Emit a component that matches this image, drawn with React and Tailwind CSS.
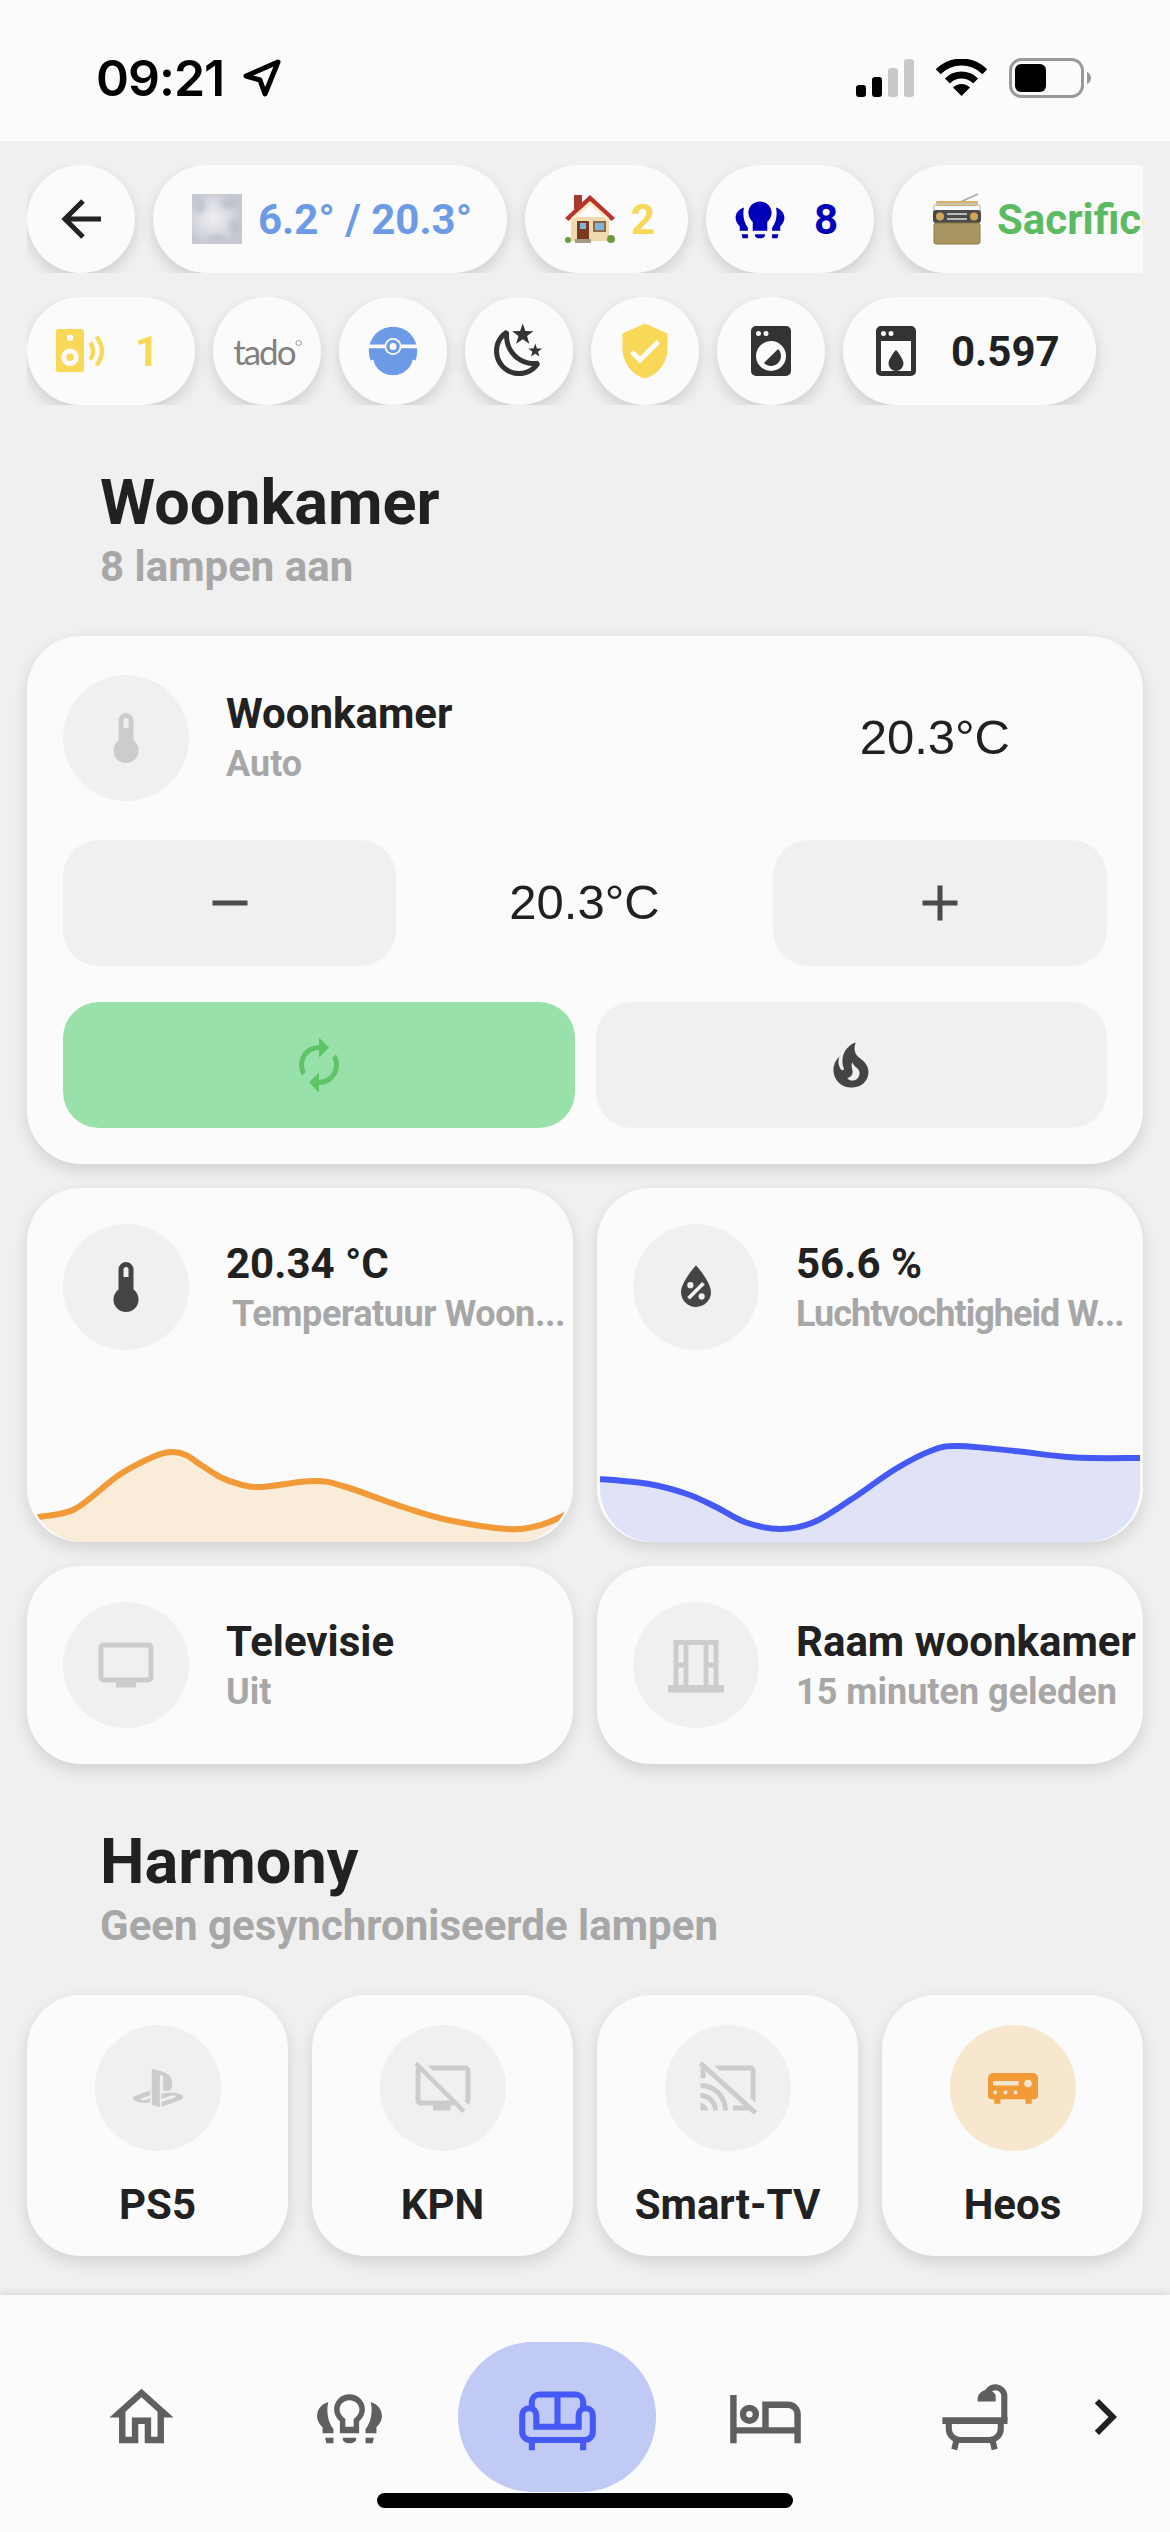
const ICONS = {
  arrowLeft: 'M20,11V13H8L13.5,18.5L12.08,19.92L4.16,12L12.08,4.08L13.5,5.5L8,11H20Z',
  moon: 'M17.75,4.09L15.22,6.03L16.13,9.09L13.5,7.28L10.87,9.09L11.78,6.03L9.25,4.09L12.44,4L13.5,1L14.56,4L17.75,4.09M21.25,11L19.61,12.25L20.2,14.23L18.5,13.06L16.8,14.23L17.39,12.25L15.75,11L17.81,10.95L18.5,9L19.19,10.95L21.25,11M18.97,15.95C19.8,15.87 20.69,17.05 20.16,17.8C19.84,18.25 19.5,18.67 19.08,19.07C15.17,23 8.84,23 4.94,19.07C1.03,15.17 1.03,8.83 4.94,4.93C5.34,4.53 5.76,4.17 6.21,3.85C6.96,3.32 8.14,4.21 8.06,5.04C7.79,7.9 8.75,10.87 10.95,13.06C13.14,15.26 16.1,16.22 18.97,15.95M17.33,17.97C14.5,17.81 11.7,16.64 9.53,14.5C7.36,12.31 6.2,9.5 6.04,6.68C3.23,9.82 3.34,14.64 6.35,17.66C9.37,20.67 14.19,20.78 17.33,17.97Z',
  shield: 'M10,17L6,13L7.41,11.59L10,14.17L16.59,7.58L18,9L10,17M12,1L3,5V11C3,16.55 6.84,21.74 12,23C17.16,21.74 21,16.55 21,11V5L12,1Z',
  washer: 'M6,2H18A2,2 0 0,1 20,4V20A2,2 0 0,1 18,22H6A2,2 0 0,1 4,20V4A2,2 0 0,1 6,2ZM7,4A1,1 0 0,0 6,5A1,1 0 0,0 7,6A1,1 0 0,0 8,5A1,1 0 0,0 7,4ZM10,4A1,1 0 0,0 9,5A1,1 0 0,0 10,6A1,1 0 0,0 11,5A1,1 0 0,0 10,4ZM12,8A6,6 0 0,0 6,14A6,6 0 0,0 12,20A6,6 0 0,0 18,14A6,6 0 0,0 12,8ZM14.83,11.17C16.39,12.73 16.39,15.27 14.83,16.83C13.27,18.39 10.73,18.39 9.17,16.83L14.83,11.17Z',
  dishwasher: 'M6 2H18A2 2 0 0 1 20 4V20A2 2 0 0 1 18 22H6A2 2 0 0 1 4 20V4A2 2 0 0 1 6 2ZM7 4A1 1 0 1 0 7 6A1 1 0 1 0 7 4ZM10 4A1 1 0 1 0 10 6A1 1 0 1 0 10 4ZM6 8V20H18V8ZM12 11.5C12 11.5 9 15 9 17A3 3 0 0 0 15 17C15 15 12 11.5 12 11.5Z',
  thermometer: 'M15 13V5A3 3 0 0 0 9 5V13A5 5 0 1 0 15 13ZM12 4A1 1 0 0 1 13 5V8H11V5A1 1 0 0 1 12 4Z',
  minus: 'M19,13H5V11H19V13Z',
  plus: 'M19,13H13V19H11V13H5V11H11V5H13V11H19V13Z',
  autorenew: 'M12,6V9L16,5L12,1V4A8,8 0 0,0 4,12C4,13.57 4.46,15.03 5.24,16.26L6.7,14.8C6.25,13.97 6,13 6,12A6,6 0 0,1 12,6M18.76,7.74L17.3,9.2C17.74,10.04 18,11 18,12A6,6 0 0,1 12,18V15L8,19L12,23V20A8,8 0 0,0 20,12C20,10.43 19.54,8.97 18.76,7.74Z',
  fire: 'M17.66 11.2C17.43 10.9 17.15 10.64 16.89 10.38C16.22 9.78 15.46 9.35 14.82 8.72C13.33 7.26 13 4.85 13.95 3C13 3.23 12.17 3.75 11.46 4.32C8.87 6.4 7.85 10.07 9.07 13.22C9.11 13.32 9.15 13.42 9.15 13.55C9.15 13.77 9 13.97 8.8 14.05C8.57 14.15 8.33 14.09 8.14 13.93C8.08 13.88 8.04 13.83 8 13.76C6.87 12.33 6.69 10.28 7.45 8.64C5.78 10 4.87 12.3 5 14.47C5.06 14.97 5.12 15.47 5.29 15.97C5.43 16.57 5.7 17.17 6 17.7C7.08 19.43 8.95 20.67 10.96 20.92C13.1 21.19 15.39 20.8 17.03 19.32C18.86 17.66 19.5 15 18.56 12.72L18.43 12.46C18.28 12.13 17.66 11.2 17.66 11.2ZM14.5 17.5C14.22 17.74 13.76 18 13.4 18.1C12.28 18.5 11.16 17.94 10.5 17.28C11.69 17 12.4 16.12 12.61 15.23C12.78 14.43 12.46 13.77 12.33 13C12.21 12.26 12.23 11.63 12.5 10.94C12.69 11.32 12.89 11.7 13.13 12C13.9 13 15.11 13.44 15.37 14.8C15.41 14.94 15.43 15.08 15.43 15.23C15.46 16.05 15.1 16.95 14.5 17.5Z',
  waterPercent: 'M12,3.25C12,3.25 6,10 6,14C6,17.32 8.69,20 12,20A6,6 0 0,0 18,14C18,10 12,3.25 12,3.25ZM14.47,9.97L15.53,11.03L9.53,17.03L8.47,15.97ZM9.75,10A1.25,1.25 0 0,1 11,11.25A1.25,1.25 0 0,1 9.75,12.5A1.25,1.25 0 0,1 8.5,11.25A1.25,1.25 0 0,1 9.75,10ZM14.25,14.5A1.25,1.25 0 0,1 15.5,15.75A1.25,1.25 0 0,1 14.25,17A1.25,1.25 0 0,1 13,15.75A1.25,1.25 0 0,1 14.25,14.5Z',
  television: 'M21,17H3V5H21ZM21,3H3A2,2 0 0,0 1,5V17A2,2 0 0,0 3,19H8V21H16V19H21A2,2 0 0,0 23,17V5A2,2 0 0,0 21,3Z',
  window: 'M3 2H21V20H23.2V23H0.8V20H3ZM5 4V11H7V4ZM5 13V20H7V13ZM9 4V20H15V4ZM17 4V11H19V4ZM17 13V20H19V13Z',
  playstation: 'M9.5,4.27C10.88,4.53 12.9,5.14 14,5.5C16.75,6.45 17.69,7.63 17.69,10.29C17.69,12.89 16.09,13.87 14.05,12.89V8.05C14.05,7.5 13.95,6.97 13.41,6.82C13,6.69 12.76,7.07 12.76,7.63V19.73L9.5,18.69V4.27M13.37,17.62L18.62,15.75C19.22,15.54 19.31,15.24 18.83,15.08C18.34,14.92 17.47,14.97 16.87,15.18L13.37,16.41V14.45L13.58,14.38C13.58,14.38 14.59,14 16,13.87C17.43,13.71 19.17,13.89 20.53,14.4C22.07,14.89 22.25,15.61 21.86,16.1C21.46,16.6 20.5,16.95 20.5,16.95L13.37,19.5V17.62M3.5,17.42C1.93,17 1.66,16.05 2.38,15.5C3.05,15 4.18,14.65 4.18,14.65L8.86,13V14.88L5.5,16.09C4.9,16.3 4.81,16.6 5.29,16.76C5.77,16.92 6.65,16.88 7.24,16.66L8.86,16.08V17.77L8.54,17.83C6.92,18.09 5.2,18 3.5,17.42Z',
  monitorOff: 'M0.5,2.77L1.78,1.5L21,20.72L19.73,22L16.73,19H15V21H8V19H3A2,2 0 0,1 1,17V5C1,4.5 1.2,4 1.5,3.77L0.5,2.77M3,17H14.73L3,5.27V17M21,17V5H7.82L5.82,3H21A2,2 0 0,1 23,5V17C23,17.7 22.64,18.32 22.09,18.68L20.41,17H21Z',
  castOff: 'M1.6,1.27L0.25,2.75L1.41,3.8C1.16,4.13 1,4.55 1,5V8H3V5.23L18.2,19H14V21H20.41L22.31,22.72L23.65,21.24M6.5,3L8.7,5H21V16.14L23,17.95V5C23,3.89 22.1,3 21,3M1,10V12A9,9 0 0,1 10,21H12C12,14.92 7.08,10 1,10M1,14V16A5,5 0 0,1 6,21H8A7,7 0 0,0 1,14M1,18V21H4A3,3 0 0,0 1,18Z',
  receiver: 'M4 6H20A2 2 0 0 1 22 8V15A1.5 1.5 0 0 1 20.5 16.5H19.5V18.3H17V16.5H7V18.3H4.5V16.5H3.5A1.5 1.5 0 0 1 2 15V8A2 2 0 0 1 4 6ZM4 9.2V11H14.2V9.2ZM18 8.7A1.5 1.5 0 1 0 18 11.7A1.5 1.5 0 1 0 18 8.7ZM4.2 13.1V14.5H5.6V13.1ZM8.3 13.1V14.5H9.7V13.1ZM12.3 13.1V14.5H13.7V13.1Z',
  home: 'M12 5.69L17 10.19V18H15V12H9V18H7V10.19L12 5.69M12 3L2 12H5V20H11V14H13V20H19V12H22L12 3Z',
  bed: 'M1 5H3V15H11V7H19A4 4 0 0 1 23 11V20H21V17H3V20H1ZM13 9V15H21V11A2 2 0 0 0 19 9ZM7 8A3 3 0 1 0 7 14A3 3 0 1 0 7 8ZM7 10A1 1 0 1 1 7 12A1 1 0 1 1 7 10Z',
  chevronRight: 'M8.59,16.58L13.17,12L8.59,7.41L10,6L16,12L10,18L8.59,16.58Z',
}

const BULB_SIDES = 'M5.4 7.2C3.3 7.8 1.9 9.5 1.9 11.5C1.9 13 2.7 14.1 3.6 15V16.9H7V15.6C5.2 13.4 4.7 10 5.4 7.2ZM18.6 7.2C20.7 7.8 22.1 9.5 22.1 11.5C22.1 13 21.3 14.1 20.4 15V16.9H17V15.6C18.8 13.4 19.3 10 18.6 7.2ZM4.4 18.3H7V20H4.8ZM19.6 18.3H17V20H19.2ZM9.9 18.3H14.1V18.6C14.1 19.5 13.2 20 12 20C10.8 20 9.9 19.5 9.9 18.6Z'
const BULB_SOLID = 'M12 4.75C14.8 4.75 16.8 6.9 16.8 9.4C16.8 11.1 15.9 12.3 15 13.2V16.9H9V13.2C8.1 12.3 7.2 11.1 7.2 9.4C7.2 6.9 9.2 4.75 12 4.75Z'
const BULB_HOLE = 'M12 6.6C10.2 6.6 8.9 8 8.9 9.5C8.9 10.7 9.7 11.7 10.7 12.5V14.9H13.3V12.5C14.3 11.7 15.1 10.7 15.1 9.5C15.1 8 13.8 6.6 12 6.6Z'

const TEMP_CURVE = [[0, 169], [9, 165], [45, 157], [89, 123], [125, 104], [142, 100], [156, 103], [171, 113], [190, 125], [209, 132], [231, 135], [283, 129], [313, 134], [373, 155], [418, 168], [477, 177], [507, 174], [533, 164], [540, 158]]
const HUMIDITY_CURVE = [[0, 127], [49, 132], [87, 142], [116, 155], [146, 170.5], [180, 177], [213, 170.5], [251, 147.6], [295.5, 117], [333, 98], [359, 94], [415, 99], [475, 105.5], [540, 106]]

// catmull-rom through the points, good enough for a sparkline
function smoothPath(points) {
  let d = `M${points[0][0]} ${points[0][1]}`
  for (let i = 0; i < points.length - 1; i++) {
    const p0 = points[i - 1] || points[i]
    const p1 = points[i]
    const p2 = points[i + 1]
    const p3 = points[i + 2] || p2
    const c1 = [p1[0] + (p2[0] - p0[0]) / 6, p1[1] + (p2[1] - p0[1]) / 6]
    const c2 = [p2[0] - (p3[0] - p1[0]) / 6, p2[1] - (p3[1] - p1[1]) / 6]
    d += `C${c1[0]} ${c1[1]} ${c2[0]} ${c2[1]} ${p2[0]} ${p2[1]}`
  }
  return d
}

function Mdi({ name, d, className = 'w-[60px] h-[60px]' }) {
  return (
    <svg viewBox="0 0 24 24" className={`shrink-0 ${className}`} fill="currentColor">
      <path fillRule="evenodd" d={d || ICONS[name]} />
    </svg>
  )
}

function BulbGroup({ outline, className }) {
  return (
    <Mdi
      className={className}
      d={`${BULB_SIDES}${BULB_SOLID}${outline ? BULB_HOLE : ''}`}
    />
  )
}

function StatusBar() {
  return (
    <div className="h-[141px] bg-[#fbfbfb] flex justify-between items-start pl-[96px] pr-[79px] pt-[58px]">
      <div className="flex items-center gap-[19px]">
        <span className="font-[Inter,sans-serif] font-semibold text-[50px] leading-[40px] tracking-[-1px] text-black">09:21</span>
        <svg viewBox="0 0 38 38" className="w-[38px] h-[38px]" fill="none" stroke="#000" strokeWidth="5" strokeLinejoin="round">
          <path d="M35 3L3 17L17 21L22 35Z" />
        </svg>
      </div>
      <div className="flex items-center">
        <svg viewBox="0 0 58 38" className="w-[58px] h-[38px]">
          <rect x="0" y="26" width="10" height="12" rx="3" fill="#000" />
          <rect x="16" y="18" width="10" height="20" rx="3" fill="#000" />
          <rect x="32" y="9" width="10" height="29" rx="3" fill="#c8c8c8" />
          <rect x="48" y="0" width="10" height="38" rx="3" fill="#c8c8c8" />
        </svg>
        <svg viewBox="0 0 51 38" className="w-[51px] h-[38px] ml-[22px]" fill="none" stroke="#000" strokeWidth="7">
          <path d="M2.2 12.7A33 33 0 0 1 48.8 12.7" />
          <path d="M11.4 21.9A20 20 0 0 1 39.6 21.9" />
          <path d="M25.5 37L17 28.5A12 12 0 0 1 34 28.5Z" fill="#000" stroke="none" />
        </svg>
        <svg viewBox="0 0 82 40" className="w-[82px] h-[40px] ml-[22px]">
          <rect x="1.5" y="1.5" width="72" height="37" rx="11" fill="none" stroke="#999" strokeWidth="3" />
          <rect x="6" y="6" width="31" height="28" rx="6" fill="#000" />
          <path d="M78 14C81 15 82 18 82 20C82 22 81 25 78 26Z" fill="#999" />
        </svg>
      </div>
    </div>
  )
}

function WeatherPicture() {
  return (
    <svg viewBox="0 0 50 50" className="w-[50px] h-[50px] shrink-0">
      <defs>
        <radialGradient id="cloudGlow" cx="0.42" cy="0.48" r="0.55">
          <stop offset="0" stopColor="#eeeff2" />
          <stop offset="0.55" stopColor="#dcdde3" />
          <stop offset="1" stopColor="#c6c8d2" />
        </radialGradient>
        <filter id="soft"><feGaussianBlur stdDeviation="2.5" /></filter>
      </defs>
      <rect width="50" height="50" fill="url(#cloudGlow)" />
      <g filter="url(#soft)" fill="#b9bbc8" opacity="0.7">
        <ellipse cx="8" cy="12" rx="6" ry="8" />
        <ellipse cx="36" cy="10" rx="8" ry="5" />
        <ellipse cx="42" cy="32" rx="5" ry="7" />
        <ellipse cx="24" cy="44" rx="9" ry="4" />
      </g>
    </svg>
  )
}

function HousePicture() {
  return (
    <svg viewBox="0 0 50 50" className="w-[50px] h-[50px] shrink-0">
      <rect x="9" y="1" width="8" height="14" fill="#a5392d" />
      <path d="M6 23H44V47H6Z" fill="#efd9ae" />
      <path d="M0 24L25 1L50 24L46.5 27L25 8L3.5 27Z" fill="#b8352c" />
      <path d="M6 24L25 7L44 24V28L25 11L6 28Z" fill="#fbe9c8" />
      <rect x="12" y="27" width="12" height="20" fill="#7a3a22" />
      <rect x="15" y="29" width="6" height="6" fill="#7fb5d8" />
      <rect x="28" y="27" width="13" height="11" fill="#8a6b4a" />
      <rect x="30" y="29" width="9" height="7" fill="#7fb5d8" />
      <rect x="10" y="45" width="16" height="4" fill="#a49a8a" />
      <circle cx="46" cy="45" r="4" fill="#6d9a3c" />
      <circle cx="3" cy="46" r="3" fill="#6d9a3c" />
    </svg>
  )
}

function RadioPicture() {
  return (
    <svg viewBox="0 0 50 52" className="w-[50px] h-[52px] shrink-0">
      <path d="M26 10L46 1" stroke="#a9a9a9" strokeWidth="1.5" />
      <rect x="4" y="8" width="42" height="5" rx="1" fill="#d6b368" />
      <path d="M2 22V14C2 12 4 11 6 11H44C46 11 48 12 48 14V22" fill="none" stroke="#c9c9c9" strokeWidth="1.5" />
      <rect x="1" y="17" width="48" height="13" rx="3" fill="#4b4a48" />
      <circle cx="8" cy="23.5" r="4" fill="#d0a85a" />
      <circle cx="42" cy="23.5" r="4" fill="#d0a85a" />
      <rect x="15" y="20" width="20" height="2" fill="#b9b9b9" />
      <rect x="15" y="25" width="20" height="2" fill="#b9b9b9" />
      <rect x="2" y="30" width="46" height="21" rx="2" fill="#a99660" stroke="#8c7a44" strokeWidth="1" />
    </svg>
  )
}

function RobotIcon() {
  return (
    <svg viewBox="0 0 24 24" className="w-[60px] h-[60px]">
      <circle cx="12" cy="12" r="9.7" fill="#6c9ae6" />
      <rect x="2" y="9.4" width="20" height="1.5" fill="#fbfbfb" />
      <circle cx="12" cy="10.2" r="3.4" fill="#fbfbfb" />
      <circle cx="12" cy="10.2" r="2.7" fill="#6c9ae6" />
      <circle cx="12" cy="10.2" r="1.4" fill="#fbfbfb" />
      <path d="M3.6 14A8.6 8.6 0 0 0 20.4 14" fill="none" stroke="#fbfbfb" strokeWidth="1.1" transform="translate(0 1.6)" />
    </svg>
  )
}

function SpeakerIcon() {
  return (
    <svg viewBox="0 0 24 24" className="w-[60px] h-[60px] shrink-0 text-[#f8d957]" fill="currentColor">
      <path
        fillRule="evenodd"
        d="M3 3.2H12.2A1 1 0 0 1 13.2 4.2V19.4A1 1 0 0 1 12.2 20.4H3A1 1 0 0 1 2 19.4V4.2A1 1 0 0 1 3 3.2ZM7.6 5.4A1.3 1.3 0 1 0 7.6 8A1.3 1.3 0 1 0 7.6 5.4ZM7.6 11A3.5 3.5 0 1 0 7.6 18A3.5 3.5 0 1 0 7.6 11ZM7.6 13A1.5 1.5 0 1 1 7.6 16A1.5 1.5 0 1 1 7.6 13Z"
      />
      <path d="M15.7 8.6Q18 12 15.7 15.4M18.2 6.3Q22.6 12 18.2 17.7" fill="none" stroke="currentColor" strokeWidth="1.7" />
    </svg>
  )
}

function Chip({ className = '', children }) {
  return (
    <div className={`h-[108px] shrink-0 rounded-[54px] bg-[#fbfbfb] shadow-[0_6px_14px_rgba(0,0,0,0.14)] flex items-center text-[42px] font-bold ${className}`}>
      {children}
    </div>
  )
}

function RoundChip({ children }) {
  return <Chip className="w-[108px] justify-center">{children}</Chip>
}

function ChipRows() {
  return (
    <div className="pt-[24px] pl-[27px] flex flex-col gap-[24px]">
      <div className="w-[1116px] flex gap-[18px] overflow-hidden">
        <RoundChip><Mdi name="arrowLeft" className="w-[60px] h-[60px] text-[#212121]" /></RoundChip>
        <Chip className="w-[354px] pl-[39px] gap-[16px] text-[#6c9ae6]">
          <WeatherPicture />
          <span>6.2° / 20.3°</span>
        </Chip>
        <Chip className="w-[163px] pl-[40px] gap-[16px] text-[#f8d957]">
          <HousePicture />
          <span>2</span>
        </Chip>
        <Chip className="w-[168px] pl-[25px] gap-[25px] text-[#0000bb]">
          <BulbGroup className="w-[58px] h-[58px]" />
          <span>8</span>
        </Chip>
        <Chip className="w-[300px] pl-[40px] gap-[15px] text-[#5cba62]">
          <RadioPicture />
          <span>Sacrifice</span>
        </Chip>
      </div>
      <div className="w-[1116px] flex gap-[18px] overflow-hidden">
        <Chip className="w-[168px] pl-[24px] gap-[24px] text-[#f8d957]">
          <SpeakerIcon />
          <span>1</span>
        </Chip>
        <RoundChip>
          <span className="font-[Lato,sans-serif] font-normal text-[35px] tracking-[-2px] text-[#808080] leading-none">
            tado<sup className="text-[20px] font-light -top-[11px]">°</sup>
          </span>
        </RoundChip>
        <RoundChip><RobotIcon /></RoundChip>
        <RoundChip><Mdi name="moon" className="w-[60px] h-[60px] text-[#333333]" /></RoundChip>
        <RoundChip><Mdi name="shield" className="w-[60px] h-[60px] text-[#f8d957]" /></RoundChip>
        <RoundChip><Mdi name="washer" className="w-[60px] h-[60px] text-[#333333]" /></RoundChip>
        <Chip className="w-[253px] pl-[23px] gap-[25px] text-[#212121]">
          <Mdi name="dishwasher" className="w-[60px] h-[60px] text-[#333333]" />
          <span>0.597</span>
        </Chip>
      </div>
    </div>
  )
}

function SectionTitle({ title, subtitle }) {
  return (
    <div className="pl-[100px] pt-[67px] pb-[44px]">
      <div className="h-[62px] leading-[62px] text-[63px] font-bold text-[#212121]">{title}</div>
      <div className="mt-[8px] h-[50px] leading-[50px] text-[42px] font-bold text-[#a7a7a7]">{subtitle}</div>
    </div>
  )
}

function IconCircle({ children, className = 'bg-[#f0f0f0]' }) {
  return (
    <div className={`w-[126px] h-[126px] shrink-0 rounded-full flex items-center justify-center ${className}`}>
      {children}
    </div>
  )
}

const CARD = 'bg-[#fbfbfb] rounded-[54px] shadow-[0_6px_16px_rgba(0,0,0,0.13)]'

function ClimateCard() {
  return (
    <div className={`${CARD} mx-[27px] h-[528px] pt-[39px] px-[36px] flex flex-col`}>
      <div className="flex items-center h-[126px]">
        <IconCircle><Mdi name="thermometer" className="w-[60px] h-[60px] text-[#cccccc]" /></IconCircle>
        <div className="ml-[37px] flex-1 pt-[2px]">
          <div className="text-[42px] leading-[50px] font-bold text-[#212121]">Woonkamer</div>
          <div className="text-[36px] leading-[50px] font-bold text-[#a7a7a7]">Auto</div>
        </div>
        <div className="font-['Liberation_Sans',sans-serif] text-[49px] text-[#212121] mr-[97px]">20.3°C</div>
      </div>
      <div className="mt-[39px] flex items-center h-[126px] justify-between">
        <div className="w-[333px] h-[126px] rounded-[36px] bg-[#f0f0f0] flex items-center justify-center">
          <Mdi name="minus" className="w-[60px] h-[60px] text-[#4a4a4a]" />
        </div>
        <div className="font-['Liberation_Sans',sans-serif] text-[49px] text-[#212121]">20.3°C</div>
        <div className="w-[334px] h-[126px] rounded-[36px] bg-[#f0f0f0] flex items-center justify-center">
          <Mdi name="plus" className="w-[60px] h-[60px] text-[#4a4a4a]" />
        </div>
      </div>
      <div className="mt-[36px] flex gap-[21px] h-[126px]">
        <div className="flex-1 rounded-[36px] bg-[#98e1ab] flex items-center justify-center">
          <Mdi name="autorenew" className="w-[60px] h-[60px] text-[#5fc467]" />
        </div>
        <div className="flex-1 rounded-[36px] bg-[#f0f0f0] flex items-center justify-center">
          <Mdi name="fire" className="w-[60px] h-[60px] text-[#444444]" />
        </div>
      </div>
    </div>
  )
}

function InfoText({ title, subtitle, subClass = '' }) {
  return (
    <div className="ml-[37px] flex-1 min-w-0 pt-[3px]">
      <div className="text-[42px] leading-[50px] font-bold text-[#212121] whitespace-nowrap">{title}</div>
      <div className={`text-[36px] leading-[50px] font-bold text-[#a7a7a7] whitespace-nowrap ${subClass}`}>{subtitle}</div>
    </div>
  )
}

function GraphCard({ name, title, subtitle, subClass, points, line, fill }) {
  const d = smoothPath(points)
  const last = points[points.length - 1][0]
  return (
    <div className={`${CARD} h-[354px] overflow-hidden flex flex-col`}>
      <div className="flex items-center h-[126px] mt-[36px] ml-[36px]">
        <IconCircle><Mdi name={name} className="w-[60px] h-[60px] text-[#444444]" /></IconCircle>
        <InfoText title={title} subtitle={subtitle} subClass={subClass} />
      </div>
      <svg viewBox="0 0 540 190" className="mt-auto mx-[3px] w-[540px] h-[190px] rounded-b-[54px]">
        <path d={`${d}L${last} 190L0 190Z`} fill={fill} />
        <path d={d} fill="none" stroke={line} strokeWidth="6" />
      </svg>
    </div>
  )
}

function EntityCard({ name, title, subtitle }) {
  return (
    <div className={`${CARD} h-[198px] pl-[36px] flex items-center`}>
      <IconCircle><Mdi name={name} className="w-[60px] h-[60px] text-[#cccccc]" /></IconCircle>
      <InfoText title={title} subtitle={subtitle} />
    </div>
  )
}

function HarmonyCard({ name, label, active }) {
  return (
    <div className={`${CARD} h-[261px] pt-[30px] flex flex-col items-center`}>
      <IconCircle className={active ? 'bg-[#f8e7cf]' : 'bg-[#f0f0f0]'}>
        <Mdi name={name} className={`w-[60px] h-[60px] ${active ? 'text-[#f29a38]' : 'text-[#cccccc]'}`} />
      </IconCircle>
      <div className="mt-[29px] text-[42px] leading-[50px] font-bold text-[#212121]">{label}</div>
    </div>
  )
}

function SofaIcon({ className }) {
  return (
    <svg viewBox="0 0 24 24" className={className} fill="none" stroke="currentColor" strokeWidth="1.9">
      <path d="M4 9.5V7A2.4 2.4 0 0 1 6.4 4.85H17.6A2.4 2.4 0 0 1 20 7V9.5" />
      <path d="M12 5V15" />
      <path d="M1 11.3A2.2 2.2 0 0 1 5.4 11.3V14.9H18.6V11.3A2.2 2.2 0 0 1 23 11.3V16.5A2.5 2.5 0 0 1 20.5 19H3.5A2.5 2.5 0 0 1 1 16.5Z" />
      <path d="M4 19V22.2M20 19V22.2" />
    </svg>
  )
}

function BathIcon({ className }) {
  return (
    <svg viewBox="0 0 24 24" className={className} fill="none" stroke="currentColor" strokeWidth="1.9">
      <path d="M2.3 13H22.6" strokeWidth="2.1" />
      <path d="M4.3 14V15.5A3.5 3.5 0 0 0 7.8 19H17A3.5 3.5 0 0 0 20.5 15.5V14" />
      <path d="M6.6 19.5L6 22M18 19.5L18.6 22" />
      <path d="M21.6 13V5A2.8 2.8 0 0 0 16.4 4" />
      <path d="M13.3 7A3 3 0 0 1 18.9 5V7Z" fill="currentColor" stroke="none" />
    </svg>
  )
}

function NavItem({ active, children }) {
  return (
    <div className="w-[208px] h-[150px] shrink-0 flex items-center justify-center">
      <div className={`w-[198px] h-[150px] rounded-[75px] flex items-center justify-center ${active ? 'bg-[#c1c9f5] text-[#4459f5]' : 'text-[#5f5f5f]'}`}>
        {children}
      </div>
    </div>
  )
}

function BottomNav() {
  const size = 'w-[77px] h-[77px]'
  return (
    <div className="h-[237px] bg-[#fbfbfb] shadow-[0_-2px_8px_rgba(0,0,0,0.1)] pt-[47px] pl-[37px] flex items-start relative">
      <NavItem><Mdi name="home" className={size} /></NavItem>
      <NavItem><BulbGroup outline className={size} /></NavItem>
      <NavItem active><SofaIcon className={size} /></NavItem>
      <NavItem><Mdi name="bed" className={size} /></NavItem>
      <NavItem><BathIcon className={size} /></NavItem>
      <div className="h-[150px] -ml-[8px] flex items-center">
        <Mdi name="chevronRight" className="w-[72px] h-[72px] text-[#212121]" />
      </div>
      {/* ios home indicator */}
      <div className="absolute left-[377px] bottom-[24px] w-[416px] h-[15px] rounded-full bg-black" />
    </div>
  )
}

export default function App() {
  return (
    <div className="w-[1170px] h-[2532px] overflow-hidden bg-[#f0f0f0] font-[Roboto,sans-serif]">
      <StatusBar />
      <ChipRows />
      <SectionTitle title="Woonkamer" subtitle="8 lampen aan" />
      <ClimateCard />
      <div className="mt-[24px] mx-[27px] grid grid-cols-2 gap-[24px]">
        <GraphCard name="thermometer" title="20.34 °C" subtitle="Temperatuur Woon..." subClass="pl-[6px] tracking-[-0.4px]" points={TEMP_CURVE} line="#f29a38" fill="#f9ecd9" />
        <GraphCard name="waterPercent" title="56.6 %" subtitle="Luchtvochtigheid W..." subClass="tracking-[-1px]" points={HUMIDITY_CURVE} line="#4459f5" fill="#e0e3f8" />
        <EntityCard name="television" title="Televisie" subtitle="Uit" />
        <EntityCard name="window" title="Raam woonkamer" subtitle="15 minuten geleden" />
      </div>
      <SectionTitle title="Harmony" subtitle="Geen gesynchroniseerde lampen" />
      <div className="mx-[27px] grid grid-cols-4 gap-[24px]">
        <HarmonyCard name="playstation" label="PS5" />
        <HarmonyCard name="monitorOff" label="KPN" />
        <HarmonyCard name="castOff" label="Smart-TV" />
        <HarmonyCard name="receiver" label="Heos" active />
      </div>
      <div className="mt-[39px]">
        <BottomNav />
      </div>
    </div>
  )
}
